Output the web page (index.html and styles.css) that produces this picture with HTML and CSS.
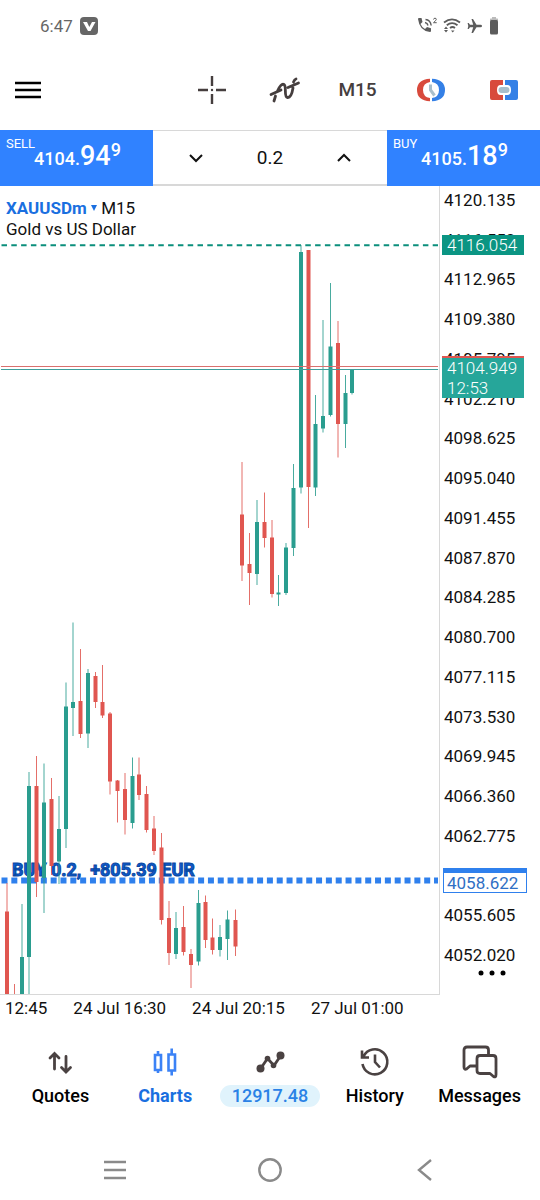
FILE: index.html
```html
<!DOCTYPE html>
<html lang="en">
<head>
  <meta charset="UTF-8" />
  <meta name="viewport" content="width=device-width, initial-scale=1.0"/>
  <title>XAUUSDm M15</title>
  <link rel="stylesheet" href="styles.css">
</head>
<body>
  <div class="status-bar">
    <span class="status-time">6:47</span>
    <svg class="status-app" width="18" height="18" viewBox="0 0 18 18"><rect x="0" y="0" width="18" height="18" rx="4" fill="#666"/><path d="M3 5h4l2.300 5L12 5h3.500L10.500 14H8z" fill="#fff"/></svg>
    <div class="status-icons">
      <svg width="20" height="18" viewBox="0 0 20 18">
        <path d="M1 2q0-1 1-1h2.500l1 4-2 2q1.500 3.500 4.500 5l2-2 4 1.200V14q0 1-1 1Q2.500 14 1 2z" fill="#5c5c5c"/>
        <path d="M8 5.500q2.500.5 3 3M8.500 2.500q5 .5 5.700 6" fill="none" stroke="#5c5c5c" stroke-width="1.400"/>
        <path d="M16.500 2.500q.2-1.300 1.500-1.300t1.300 1.200q0 .8-2.800 3.300h3.200" fill="none" stroke="#5c5c5c"/>
      </svg>
      <svg width="18" height="18" viewBox="0 0 18 18">
        <path d="M1 5.500Q9-.8 17 5.500M3.800 8.300Q9 4 14.500 8.300M7 11q2.500-2 5 0" fill="none" stroke="#5c5c5c" stroke-width="1.800"/>
        <path d="M8 13.500h3.500L9.700 15.500zM1 12l2-2.500L5 12zM1 13l2 2.500L5 13z" fill="#5c5c5c"/>
      </svg>
      <svg width="16" height="18" viewBox="0 0 16 18"><path d="M15 9q0-1.300-1.500-1.300H9.500L6 2H4.500l1.700 5.700H3L1.700 6H.6l.7 3-.7 3h1.100L3 10.300h3.200L4.500 16H6l3.500-5.700h4Q15 10.300 15 9z" fill="#5c5c5c"/></svg>
      <svg width="10" height="18" viewBox="0 0 10 18"><path d="M3 0h4v1.500h1.500q.5 0 .5.500v2H1V2q0-.5.500-.5H3z" fill="#bbb"/><rect x="1" y="3" width="8" height="14.500" rx="1.500" fill="#5c5c5c"/></svg>
    </div>
  </div>

  <header class="toolbar">
    <button class="menu-btn" aria-label="Menu"><svg width="26" height="18" viewBox="0 0 26 18"><path d="M0 2h26M0 9h26M0 16h26" stroke="#000" stroke-width="2.600"/></svg></button>
    <button class="tool-btn" aria-label="Crosshair"><svg width="28" height="28" viewBox="0 0 28 28"><path d="M14 0v10M14 18v10M0 14h10M18 14h10" stroke="#453e3e" stroke-width="2.400"/><circle cx="14" cy="14" r="1.200" fill="#453e3e"/></svg></button>
    <button class="tool-btn" aria-label="Indicators">
      <svg width="32" height="28" viewBox="0 0 32 28"><path d="M5 25 6.500 20M8.500 15Q12 7 15 8.500C18 10.500 14.500 21 18.500 21.500C22.500 22 23.500 15 24 12M24.500 6Q25.500 3.500 27 3M2 18.500l10-4.500M19 11.500l10.500-4.500" fill="none" stroke="#453e3e" stroke-width="2.800" stroke-linecap="round"/></svg>
    </button>
    <button class="tool-btn timeframe">M15</button>
    <button class="tool-btn" aria-label="Trading sessions">
      <svg width="28" height="24" viewBox="0 0 28 24">
        <path d="M13 .7V4Q6 5 6 12t7 8v3.300Q0 22.500 0 12T13 .7z" fill="#d84a3c"/>
        <path d="M15 .7V4q7 1 7 8t-7 8v3.300Q28 22.500 28 12T15 .7z" fill="#3480e6"/>
        <path d="M13.500 6.500V12l4 5.500" fill="none" stroke="#a9bfcb" stroke-width="3"/>
      </svg>
    </button>
    <button class="tool-btn" aria-label="One click trading">
      <svg width="28" height="20" viewBox="0 0 28 20">
        <path d="M13 0H2Q0 0 0 2v16q0 2 2 2h11v-5h-2.500Q7 15 7 10t3.500-5H13z" fill="#d84a3c"/>
        <path d="M15 0h11q2 0 2 2v16q0 2-2 2H15v-5h2.500Q21 15 21 10t-3.500-5H15z" fill="#3480e6"/>
        <rect x="8.500" y="7" width="11" height="6" rx="3" fill="#a9bfcb"/>
      </svg>
    </button>
  </header>

  <section class="trade-bar">
    <button class="trade-btn">
      <span class="trade-side">SELL</span>
      <span class="trade-price">4104.<span class="pips">94</span><span class="point">9</span></span>
    </button>
    <div class="volume">
      <button class="step-btn" aria-label="Decrease volume"><svg width="14" height="10" viewBox="0 0 14 10"><path d="M1 2l6 6 6-6" fill="none" stroke="#111" stroke-width="2"/></svg></button>
      <input class="volume-input" type="text" value="0.2" aria-label="Volume">
      <button class="step-btn" aria-label="Increase volume"><svg width="14" height="10" viewBox="0 0 14 10"><path d="M1 8l6-6 6 6" fill="none" stroke="#111" stroke-width="2"/></svg></button>
    </div>
    <button class="trade-btn">
      <span class="trade-side">BUY</span>
      <span class="trade-price">4105.<span class="pips">18</span><span class="point">9</span></span>
    </button>
  </section>

  <main class="chart">
    <div class="plot">
      <svg class="plot-svg" viewBox="0 186 439 808">
        <text class="order-text" x="12" y="876">BUY 0.2,  +805.39 EUR</text>
        <path class="order-line" d="M1.500 880.500H438"/>
        <path class="level-line" d="M1.500 245.300H438"/>
        <g id="candles"></g>
        <path class="ask-line" d="M1 366.500H438"/>
        <path class="bid-line" d="M1 369.500H438"/>
      </svg>
      <div class="chart-title">
        <div><a class="symbol" href="#">XAUUSDm <svg width="6" height="6" viewBox="0 0 6 6"><path d="M0 0h6L3 6z" fill="#1a6fe0"/></svg></a> M15</div>
        <div>Gold vs US Dollar</div>
      </div>
    </div>
    <div class="price-axis">
      <span>4120.135</span>
      <span>4116.550</span>
      <span>4112.965</span>
      <span>4109.380</span>
      <span>4105.795</span>
      <span>4102.210</span>
      <span>4098.625</span>
      <span>4095.040</span>
      <span>4091.455</span>
      <span>4087.870</span>
      <span>4084.285</span>
      <span>4080.700</span>
      <span>4077.115</span>
      <span>4073.530</span>
      <span>4069.945</span>
      <span>4066.360</span>
      <span>4062.775</span>
      <span class="covered"></span>
      <span>4055.605</span>
      <span>4052.020</span>
      <div class="tag tag-level">4116.054</div>
      <div class="tag tag-bid">4104.949<br>12:53</div>
      <div class="tag tag-order">4058.622</div>
      <button class="more-btn" aria-label="More"><svg width="28" height="6" viewBox="0 0 28 6"><circle cx="3" cy="3" r="2.500"/><circle cx="14" cy="3" r="2.500"/><circle cx="25" cy="3" r="2.500"/></svg></button>
    </div>
  </main>
  <div class="time-axis">
    <span>12:45</span>
    <span>24 Jul 16:30</span>
    <span>24 Jul 20:15</span>
    <span>27 Jul 01:00</span>
  </div>

  <nav class="tabs">
    <a class="tab" href="#">
      <svg width="36" height="34" viewBox="0 0 36 34"><path d="M12.500 24V9.500M8 13l4.500-4.500L17 13M24 11.500V26M19.500 22.500 24 27l4.500-4.500" fill="none" stroke="#4a4242" stroke-width="2.800" stroke-linecap="round"/></svg>
      <span>Quotes</span>
    </a>
    <a class="tab active" href="#">
      <svg width="36" height="34" viewBox="0 0 36 34"><path d="M8 10h6v15H8zM21.500 9.500h6.500v16h-6.500zM11 6v4M11 25v3M24.700 3.500v6M24.700 25.500v5" fill="none" stroke="#3b82f6" stroke-width="2.600"/></svg>
      <span>Charts</span>
    </a>
    <a class="tab trade" href="#">
      <svg width="36" height="34" viewBox="0 0 36 34"><path d="M8 24.500 15.500 13.500 22 20.500 28.500 11" fill="none" stroke="#4a4242" stroke-width="2.800"/><g fill="#4a4242"><circle cx="8.500" cy="23.500" r="4"/><circle cx="15.500" cy="13.500" r="2.800"/><circle cx="21.500" cy="20.500" r="2.800"/><circle cx="28.500" cy="10.500" r="4"/></g></svg>
      <span>12917.48</span>
    </a>
    <a class="tab" href="#">
      <svg width="36" height="34" viewBox="0 0 36 34"><path d="M6.500 11.500A12.500 12.500 0 1 1 5.500 19M5 5.500v7h7M18 9.500V17l5 5.500" fill="none" stroke="#4a4242" stroke-width="2.600"/></svg>
      <span>History</span>
    </a>
    <a class="tab" href="#">
      <svg width="36" height="34" viewBox="0 0 36 34"><path d="M14.500 21H8L4.500 24Q2 25 2 22V5Q2 2 5 2H23.500Q26.500 2 26.500 5V10.500M18 10.500H31Q34 10.500 34 13.500V29.500Q34 33 31.500 31.500L28 28.500H18Q15 28.500 15 25.500V13.500Q15 10.500 18 10.500Z" fill="none" stroke="#4a4242" stroke-width="2.800" stroke-linejoin="round"/></svg>
      <span>Messages</span>
    </a>
  </nav>

  <div class="system-nav">
    <button aria-label="Recent apps"><svg width="24" height="24" viewBox="0 0 24 24"><path d="M1 4h22M1 12h22M1 20h22"/></svg></button>
    <button aria-label="Home"><svg width="24" height="24" viewBox="0 0 24 24"><circle cx="12" cy="12" r="10.700"/></svg></button>
    <button aria-label="Back"><svg width="24" height="24" viewBox="0 0 24 24"><path d="M18 2 6 12l12 10"/></svg></button>
  </div>
  <script src="script.js"></script>
</body>
</html>
```
FILE: styles.css
```css
/* Base reset */
* { box-sizing: border-box; margin: 0; padding: 0; }
body {
  font-family: Roboto, "Liberation Sans", sans-serif;
  font-size: 17px;
  line-height: 22px;
  background: #fff;
  color: #111;
}
button { background: none; border: none; font: inherit; color: inherit; cursor: pointer; }
a { color: inherit; text-decoration: none; }
svg { flex: none; }

/* Phone status bar */
.status-bar {
  display: flex; align-items: center;
  height: 50px; padding: 1px 41px 0 40px;
  color: #666;
}
.status-time { margin-right: 7px; }
.status-icons { display: flex; gap: 6px; margin-left: auto; }

/* Toolbar */
.toolbar { display: flex; align-items: center; height: 80px; }
.menu-btn { display: flex; padding: 15px; margin-right: auto; }
.tool-btn { display: flex; justify-content: center; align-items: center; width: 73px; height: 48px; }
.timeframe { font-size: 19px; font-weight: 500; color: #453e3e; }

/* Sell / volume / buy */
.trade-bar { display: grid; grid-template-columns: 17fr 26fr 17fr; height: 56px; }
.trade-btn {
  display: flex; align-items: flex-start;
  padding: 6px 6px 0;
  background: #3082ff; color: #fff;
  text-align: left;
}
.trade-side { width: 28px; font-size: 13px; line-height: 16px; }
.trade-price { display: flex; align-items: baseline; line-height: 40px; font-weight: 500; font-size: 18px; }
.pips { font-size: 27px; }
.point { align-self: flex-start; line-height: 28px; font-size: 18px; }
.volume {
  display: flex; align-items: center; justify-content: space-between;
  padding: 0 22px;
  border-top: 1px solid #d8d8d8; border-bottom: 2px solid #d8d8d8;
}
.step-btn { display: flex; justify-content: center; width: 42px; padding: 16px 0; }
.volume-input { width: 60px; border: none; outline: none; background: none; font: inherit; font-size: 19px; text-align: center; color: #111; }

/* Chart */
.chart { display: flex; }
.plot { position: relative; flex: 1; border-right: 1px solid #d8d8d8; border-bottom: 1px solid #d8d8d8; }
.plot-svg { display: block; width: 100%; height: auto; }
.chart-title { position: absolute; top: 12px; left: 6px; line-height: 21px; font-size: 17px; }
.symbol { font-weight: 700; color: #1a6fe0; }
.symbol svg { vertical-align: 3px; }
.up { stroke: #2a9d8f; fill: #2a9d8f; }
.down { stroke: #e05650; fill: #e05650; }
.wick { stroke-width: 1; opacity: 0.85; }
.body { stroke: none; }
.level-line { stroke: #0b8f7c; stroke-width: 2; stroke-dasharray: 5.500 4.300; }
.order-line { stroke: #2f80ed; stroke-width: 6; stroke-dasharray: 6 3.830; }
.ask-line { stroke: #d9706e; }
.bid-line { stroke: #3f9f9c; }
.order-text { font-size: 18px; font-weight: 700; fill: #0d5bd0; stroke: #0b479f; stroke-width: 1; white-space: pre; }

/* Price scale */
.price-axis {
  position: relative;
  display: flex; flex-direction: column; justify-content: space-between;
  width: 100px; padding: 2px 0 28px 4px;
}
.price-axis span { height: 24px; line-height: 24px; }
.tag { position: absolute; left: 2px; width: 82px; padding-left: 5px; line-height: 20px; color: #fff; font-weight: 300; }
.tag-level { top: 49px; height: 20px; background: #0b9583; }
.tag-bid { top: 170px; height: 42px; background: #26a69a; border-top: 2px solid #e05650; }
.tag-order { top: 682px; left: 3px; width: 84px; height: 25px; padding-left: 3px; background: #fff; border: 1px solid #2f80ed; border-top-width: 5px; color: #2f6fc4; font-weight: 400; }
.more-btn { position: absolute; right: 34px; bottom: 19px; display: flex; }

.time-axis { display: flex; gap: 26px; padding: 1px 0 0 5px; line-height: 24px; white-space: nowrap; }

/* Bottom tabs */
.tabs { display: grid; grid-template-columns: repeat(5, 1fr); padding: 25px 8px 0; }
.tab { display: flex; flex-direction: column; align-items: center; gap: 6px; font-size: 18px; font-weight: 500; color: #000; }
.tab.active { color: #1a6fe0; font-weight: 700; }
.tab.trade span { padding: 0 12px; border-radius: 11px; background: #e0f3fc; color: #2b82e6; }

.system-nav { display: flex; justify-content: space-between; padding: 51px 103px 18px; }
.system-nav button { display: flex; }
.system-nav svg { fill: none; stroke: #8a8a8a; stroke-width: 2.400; }
```
FILE: script.js
```js
// x, high, body top, body bottom, low, direction
const candles = [
  [7, 883, 911.5, 994, 994, 'down'],
  [14.5, 984, 994, 994, 994, 'down'],
  [22, 904, 957, 994, 994, 'up'],
  [29, 772, 786, 957, 994, 'up'],
  [36.5, 756, 786, 882, 897, 'down'],
  [44, 763.5, 802.5, 878, 913, 'up'],
  [51.5, 778, 799, 866, 875, 'down'],
  [59, 796, 829, 861.5, 884, 'up'],
  [66, 682.5, 706.5, 829, 848, 'up'],
  [73, 622.5, 702, 708, 736, 'up'],
  [80.5, 649, 701, 734, 738, 'down'],
  [88, 669, 673, 733.5, 748, 'up'],
  [95.5, 672, 676, 702, 708, 'down'],
  [102.5, 665, 702, 715.5, 718, 'down'],
  [110, 712, 713.5, 781.5, 794.5, 'down'],
  [117.5, 780, 780.5, 791, 822.5, 'down'],
  [125, 773, 789, 820, 834.5, 'down'],
  [132.5, 757.5, 776, 823, 828.5, 'up'],
  [139, 757.5, 774.5, 795, 800, 'down'],
  [146.5, 786, 794, 830, 832.5, 'down'],
  [154, 816, 828.5, 851, 855, 'down'],
  [161.5, 833, 847.5, 920, 924.5, 'down'],
  [169, 901, 918, 953, 965, 'down'],
  [176, 912, 928, 954, 959, 'up'],
  [183.5, 906, 927, 952, 955.5, 'down'],
  [191, 949, 954, 965, 988, 'down'],
  [198.5, 890, 903, 961.5, 965.5, 'up'],
  [205.5, 895.5, 902, 940, 948, 'down'],
  [212.5, 918.5, 937.5, 950, 954.5, 'down'],
  [220, 925, 937, 950, 956.5, 'up'],
  [227.5, 910.5, 919.5, 939, 960, 'up'],
  [235.5, 909.5, 920, 946.5, 956, 'down'],
  [242, 462, 514.5, 565.5, 581, 'down'],
  [249.5, 533, 564, 573, 605, 'down'],
  [257, 500, 522, 574, 585, 'up'],
  [264.5, 492.5, 522, 538, 547.5, 'down'],
  [272, 520, 537.5, 594, 597.5, 'down'],
  [278.5, 575, 592.5, 594.5, 606, 'up'],
  [286, 543, 547.5, 593, 595, 'up'],
  [293.5, 464, 488, 548, 556, 'up'],
  [301, 245, 252, 487.5, 493.5, 'up'],
  [308.5, 250, 250, 487, 528, 'down'],
  [315.5, 395, 424, 487.5, 496, 'up'],
  [323, 320, 416, 428.5, 432.5, 'up'],
  [330.5, 283, 346.5, 415, 416.5, 'up'],
  [338, 321, 343, 424, 457.5, 'down'],
  [345.5, 375, 393, 424, 448, 'up'],
  [352, 369, 369.5, 393, 394.5, 'up']
];

document.getElementById('candles').innerHTML = candles.map(([x, high, top, bottom, low, dir]) =>
  `<g class="${dir}"><path class="wick" d="M${x} ${high}V${low}"/><rect class="body" x="${x - 2}" y="${top}" width="4" height="${bottom - top}"/></g>`
).join('');
```
